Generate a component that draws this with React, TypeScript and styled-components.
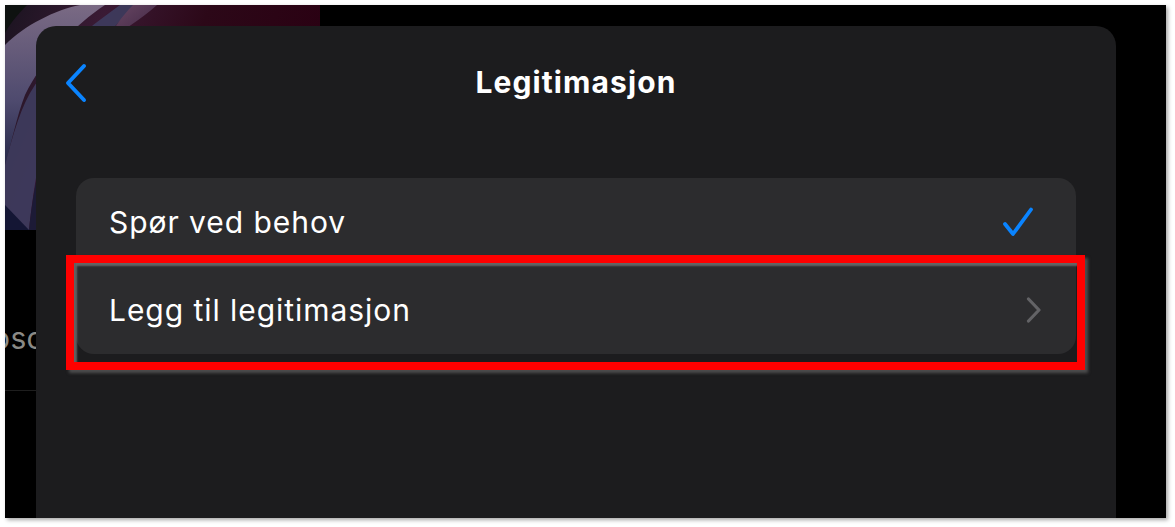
import React from 'react';
import styled, { createGlobalStyle } from 'styled-components';

const GlobalStyle = createGlobalStyle`
  html, body {
    margin: 0;
    padding: 0;
    background: #ffffff;
  }
  body {
    font-family: Inter, "Noto Sans", "Liberation Sans", sans-serif;
    -webkit-font-smoothing: antialiased;
  }
`;

const Page = styled.div`
  width: 1175px;
  height: 527px;
  padding: 5px 9px 9px 5px;
  box-sizing: border-box;
`;

const Frame = styled.div`
  position: relative;
  width: 1161px;
  height: 513px;
  background: #000;
  overflow: hidden;
  box-shadow: 2px 2px 4px rgba(0, 0, 0, 0.35);
  display: flex;
`;

const BackScreen = styled.div`
  width: 315px;
  display: flex;
  flex-direction: column;
`;

const Wallpaper = styled.div`
  height: 225px;
  flex-shrink: 0;
  svg {
    display: block;
  }
`;

const ListBehind = styled.div`
  height: 161px;
  display: flex;
  align-items: center;
  border-bottom: 1px solid #1e1e1e;
  padding-top: 56px;
  box-sizing: border-box;
  overflow: hidden;
`;

const BehindText = styled.span`
  font-size: 30px;
  color: #8a8a86;
  margin-left: -13px;
  letter-spacing: 0.4px;
`;

const Sheet = styled.div`
  position: absolute;
  left: 31px;
  top: 21px;
  width: 1080px;
  bottom: -20px;
  background: #1c1c1e;
  border-radius: 20px;
  padding: 0 40px;
  box-sizing: border-box;
`;

const Header = styled.div`
  position: relative;
  height: 112px;
  display: flex;
  align-items: center;
  justify-content: center;
`;

const BackButton = styled.button`
  position: absolute;
  left: -13px;
  top: 37px;
  width: 26px;
  height: 40px;
  padding: 0;
  border: 0;
  background: transparent;
  display: flex;
  align-items: center;
  justify-content: center;
`;

const Title = styled.h1`
  margin: 0;
  font-size: 30px;
  font-weight: 700;
  color: #ffffff;
  letter-spacing: 1.1px;
`;

const Group = styled.div`
  margin-top: 40px;
  background: #2c2c2e;
  border-radius: 18px;
`;

const Row = styled.div<{ $pr: number }>`
  position: relative;
  height: 88px;
  display: flex;
  align-items: center;
  justify-content: space-between;
  padding: 0 ${(p) => p.$pr}px 0 33px;
`;

const RowLabel = styled.span`
  font-size: 30px;
  font-weight: 400;
  color: #ffffff;
  letter-spacing: 0.95px;
`;

const Highlight = styled.div`
  position: absolute;
  left: -10px;
  right: -9px;
  top: -11px;
  bottom: -16px;
  border: 8px solid #ff0000;
  box-shadow: inset 3px 3px 2px rgba(120, 120, 120, 0.75),
    3px 3px 3px rgba(90, 90, 90, 0.8);
  pointer-events: none;
`;

const WallpaperArt = () => (
  <svg width="315" height="225" viewBox="0 0 315 225">
    <defs>
      <linearGradient id="wbase" x1="0" y1="0" x2="1" y2="0.3">
        <stop offset="0" stopColor="#1a1420" />
        <stop offset="0.3" stopColor="#3a1a34" />
        <stop offset="0.6" stopColor="#2c0818" />
        <stop offset="1" stopColor="#2a0012" />
      </linearGradient>
      <linearGradient id="band1" x1="0" y1="0" x2="0" y2="1">
        <stop offset="0" stopColor="#7a6a84" />
        <stop offset="0.6" stopColor="#4e4a6e" />
        <stop offset="1" stopColor="#262848" />
      </linearGradient>
      <linearGradient id="band2" x1="0" y1="0" x2="1" y2="1">
        <stop offset="0" stopColor="#6c4a66" />
        <stop offset="1" stopColor="#3a2240" />
      </linearGradient>
    </defs>
    <rect width="315" height="225" fill="url(#wbase)" />
    <path d="M0 0 L22 0 C12 10 4 20 0 28 Z" fill="#0e1210" />
    <path d="M0 40 C20 20 50 5 75 0 L100 0 C70 20 40 50 20 90 C12 110 6 140 0 160 Z" fill="url(#band1)" />
    <path d="M0 160 C8 130 16 100 30 80 C50 50 80 25 115 0 L132 0 C100 30 70 60 50 100 C38 130 30 170 24 225 L0 225 Z" fill="#3e3c5e" opacity="0.9" />
    <path d="M24 225 C30 170 40 130 56 100 C70 75 90 50 110 30 L130 30 C100 70 80 110 68 150 C60 180 56 200 54 225 Z" fill="#1c1a36" />
    <path d="M128 0 L152 0 C135 15 118 25 100 38 C108 25 116 12 128 0 Z" fill="url(#band2)" />
    <path d="M0 200 L24 225 L0 225 Z" fill="#141634" />
  </svg>
);

const BackChevron = () => (
  <svg width="24" height="40" viewBox="0 0 24 40">
    <path d="M20 3 L4 20 L20 37" fill="none" stroke="#0a84ff" strokeWidth="4" strokeLinecap="round" strokeLinejoin="round" />
  </svg>
);

const Checkmark = () => (
  <svg width="32" height="30" viewBox="0 0 32 30">
    <path d="M3 17 L11 27 L29 2.5" fill="none" stroke="#0a84ff" strokeWidth="3.8" strokeLinecap="round" strokeLinejoin="round" />
  </svg>
);

const ChevronRight = () => (
  <svg width="16" height="26" viewBox="0 0 16 26">
    <path d="M2.5 2 L13 13 L2.5 24" fill="none" stroke="#636366" strokeWidth="3.2" strokeLinecap="round" strokeLinejoin="round" />
  </svg>
);

export default function App() {
  return (
    <>
      <GlobalStyle />
      <Page>
        <Frame>
          <BackScreen>
            <Wallpaper>
              <WallpaperArt />
            </Wallpaper>
            <ListBehind>
              <BehindText>osc</BehindText>
            </ListBehind>
          </BackScreen>

          <Sheet>
            <Header>
              <BackButton aria-label="Tilbake">
                <BackChevron />
              </BackButton>
              <Title>Legitimasjon</Title>
            </Header>

            <Group>
              <Row $pr={42}>
                <RowLabel>Spør ved behov</RowLabel>
                <Checkmark />
              </Row>
              <Row $pr={34}>
                <RowLabel>Legg til legitimasjon</RowLabel>
                <ChevronRight />
                <Highlight />
              </Row>
            </Group>
          </Sheet>
        </Frame>
      </Page>
    </>
  );
}
